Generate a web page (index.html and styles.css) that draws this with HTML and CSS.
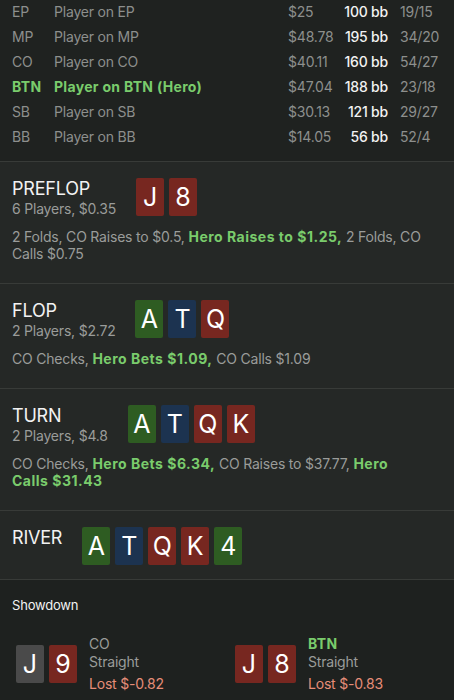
FILE: index.html
```html
<!DOCTYPE html>
<html lang="en">

<head>
    <meta charset="UTF-8">
    <meta name="viewport" content="width=device-width, initial-scale=1.0">
    <title>Hand History</title>
    <link rel="stylesheet" href="styles.css">
</head>

<body>
    <!-- Seats -->
    <section class="players">
        <div class="player-row">
            <span class="pos">EP</span><span class="name">Player on EP</span>
            <span class="money">$25</span><span class="bb">100 bb</span><span class="stat">19/15</span>
        </div>
        <div class="player-row">
            <span class="pos">MP</span><span class="name">Player on MP</span>
            <span class="money">$48.78</span><span class="bb">195 bb</span><span class="stat">34/20</span>
        </div>
        <div class="player-row">
            <span class="pos">CO</span><span class="name">Player on CO</span>
            <span class="money">$40.11</span><span class="bb">160 bb</span><span class="stat">54/27</span>
        </div>
        <div class="player-row hero">
            <span class="pos">BTN</span><span class="name">Player on BTN (Hero)</span>
            <span class="money">$47.04</span><span class="bb">188 bb</span><span class="stat">23/18</span>
        </div>
        <div class="player-row">
            <span class="pos">SB</span><span class="name">Player on SB</span>
            <span class="money">$30.13</span><span class="bb">121 bb</span><span class="stat">29/27</span>
        </div>
        <div class="player-row">
            <span class="pos">BB</span><span class="name">Player on BB</span>
            <span class="money">$14.05</span><span class="bb">56 bb</span><span class="stat">52/4</span>
        </div>
    </section>

    <!-- Streets -->
    <section class="street">
        <div class="street-head">
            <div class="street-title">
                <h2>PREFLOP</h2>
                <p>6 Players, $0.35</p>
            </div>
            <div class="cards">
                <span class="card red">J</span>
                <span class="card red">8</span>
            </div>
        </div>
        <p class="actions">2 Folds, CO Raises to $0.5, <b>Hero Raises to $1.25,</b> 2 Folds, CO Calls $0.75</p>
    </section>

    <section class="street">
        <div class="street-head">
            <div class="street-title">
                <h2>FLOP</h2>
                <p>2 Players, $2.72</p>
            </div>
            <div class="cards">
                <span class="card green">A</span>
                <span class="card blue">T</span>
                <span class="card red">Q</span>
            </div>
        </div>
        <p class="actions">CO Checks, <b>Hero Bets $1.09,</b> CO Calls $1.09</p>
    </section>

    <section class="street">
        <div class="street-head">
            <div class="street-title">
                <h2>TURN</h2>
                <p>2 Players, $4.8</p>
            </div>
            <div class="cards">
                <span class="card green">A</span>
                <span class="card blue">T</span>
                <span class="card red">Q</span>
                <span class="card red">K</span>
            </div>
        </div>
        <p class="actions">CO Checks, <b>Hero Bets $6.34,</b> CO Raises to $37.77, <b>Hero Calls $31.43</b></p>
    </section>

    <section class="street river">
        <div class="street-head">
            <div class="street-title">
                <h2>RIVER</h2>
            </div>
            <div class="cards">
                <span class="card green">A</span>
                <span class="card blue">T</span>
                <span class="card red">Q</span>
                <span class="card red">K</span>
                <span class="card green">4</span>
            </div>
        </div>
    </section>

    <!-- Showdown -->
    <section class="showdown">
        <h3>Showdown</h3>
        <div class="hands">
            <div class="hand">
                <div class="cards">
                    <span class="card grey">J</span>
                    <span class="card red">9</span>
                </div>
                <div class="hand-info">
                    <span>CO</span>
                    <span>Straight</span>
                    <span class="lost">Lost $-0.82</span>
                </div>
            </div>
            <div class="hand">
                <div class="cards">
                    <span class="card red">J</span>
                    <span class="card red">8</span>
                </div>
                <div class="hand-info">
                    <span class="hero-name">BTN</span>
                    <span>Straight</span>
                    <span class="lost">Lost $-0.83</span>
                </div>
            </div>
        </div>
    </section>
</body>

</html>
```

FILE: styles.css
```css
body {
    font-family: Inter, "Noto Sans", sans-serif;
    margin: 0;
    padding: 0;
    background-color: #1e211f;
    color: #9a9c9a;
    font-size: 14px;
    letter-spacing: -0.2px;
}

b {
    letter-spacing: 0.5px;
}

/* seats table */
.players {
    background-color: #1f2220;
    margin-top: -1px;
    padding: 0 12px 12px;
    border-bottom: 1px solid #383b38;
}

.player-row {
    display: grid;
    grid-template-columns: 42px 234px 50px 50px auto;
    height: 25px;
    align-items: center;
    color: #8d8f8d;
}

.player-row .bb {
    color: #f2f2f2;
    font-weight: 500;
    text-align: right;
}

.player-row .stat {
    padding-left: 12px;
}

.player-row.hero .pos,
.player-row.hero .name {
    color: #7acc6c;
    font-weight: 700;
    letter-spacing: 0.3px;
}

/* streets */
.street {
    background-color: #252826;
    padding: 16px 12px 21px;
    border-bottom: 1px solid #383b38;
}

.street.river {
    padding-bottom: 14px;
}

.street-head {
    display: flex;
    align-items: flex-start;
    gap: 20px;
}

.street-title h2 {
    margin: 0;
    font-size: 18px;
    font-weight: 400;
    line-height: 22px;
    color: #f2f2f2;
}

.street-title p {
    margin: 0;
    line-height: 17px;
}

.actions {
    margin: 11px 0 0;
    padding-right: 16px;
    line-height: 17px;
}

.actions b {
    color: #7acc6c;
}

/* cards */
.cards {
    display: flex;
    gap: 5px;
}

.card {
    width: 28px;
    height: 38px;
    border-radius: 2px;
    display: flex;
    align-items: center;
    justify-content: center;
    color: #fff;
    font-size: 25px;
    letter-spacing: 0;
}

.card.red {
    background-color: #772720;
}

.card.green {
    background-color: #2e5c22;
}

.card.blue {
    background-color: #1c3350;
}

.card.grey {
    background-color: #4a4a4a;
}

/* showdown */
.showdown {
    background-color: #1e211f;
    padding: 16px 0 0;
}

.showdown h3 {
    margin: 0 12px;
    font-size: 13px;
    font-weight: 400;
    line-height: 18px;
    color: #f2f2f2;
}

.hands {
    display: grid;
    grid-template-columns: 219px 219px;
    padding: 21px 0 0 16px;
}

.hand {
    display: flex;
    align-items: center;
    gap: 12px;
}

.hand-info {
    display: flex;
    flex-direction: column;
    line-height: 18px;
}

.hand-info .hero-name {
    color: #7acc6c;
    font-weight: 700;
    letter-spacing: 0.3px;
}

.hand-info .lost {
    color: #e68d78;
    margin-top: 4px;
}
```
